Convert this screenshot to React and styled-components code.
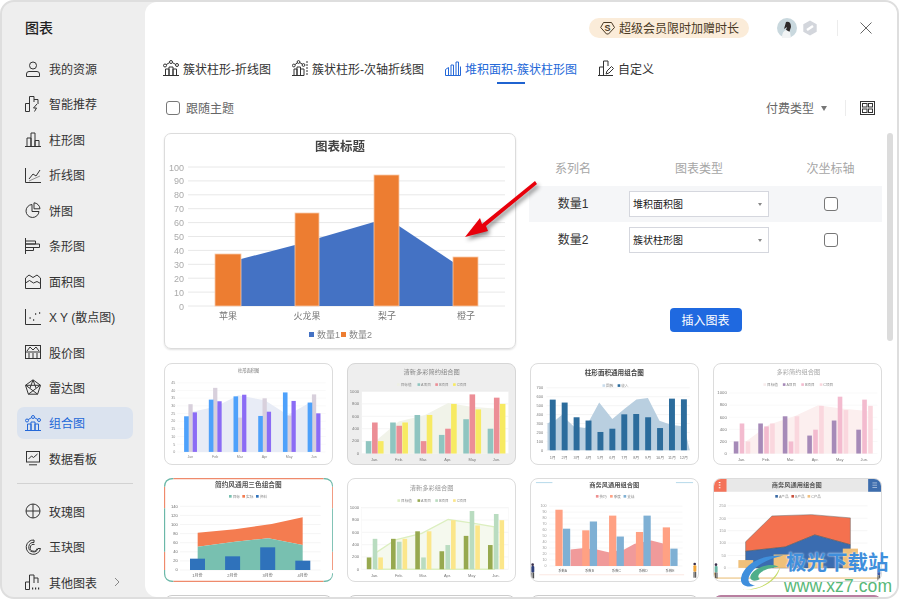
import React from "react";
import styled, { createGlobalStyle } from "styled-components";

const FONT = `"Liberation Sans", "Noto Sans CJK SC", sans-serif`;

const GlobalStyle = createGlobalStyle`
  html, body {
    margin: 0;
    padding: 0;
    background: #fff;
    font-family: ${FONT};
    overflow: hidden;
  }
  * { box-sizing: border-box; }
`;

const Frame = styled.div`
  width: 899px;
  height: 599px;
  border: 2px solid #dedede;
  border-radius: 14px;
  background: #eeeeee;
  display: flex;
  overflow: hidden;
`;

const Sidebar = styled.aside`
  width: 143px;
  flex: none;
  padding-top: 16px;
  color: #333;
`;

const SideTitle = styled.div`
  height: 20px;
  line-height: 20px;
  margin: 0 0 14.5px 23px;
  font-size: 14px;
  font-weight: 500;
  color: #222;
`;

const SideItem = styled.div`
  height: 32px;
  width: 116px;
  margin: 0 0 3.45px 15px;
  padding-left: 8px;
  display: flex;
  align-items: center;
  gap: 8px;
  font-size: 12px;
  border-radius: 7px;
  color: ${(p) => (p.$active ? "#2468d8" : "#333")};
  background: ${(p) => (p.$active ? "#dbe3ef" : "transparent")};
`;

const Chevron = styled.svg`
  margin-left: 9px;
`;

const SideDivider = styled.div`
  width: 116px;
  height: 1px;
  margin: 9px 0 11px 15px;
  background: #d2d2d2;
`;

const IconBox = styled.svg`
  width: 16px;
  height: 16px;
  flex: none;
  fill: none;
  stroke: currentColor;
  stroke-width: 1;
`;

const Main = styled.main`
  flex: 1;
  min-width: 0;
  background: #fff;
  border-radius: 12px 0 0 12px;
  position: relative;
  overflow: hidden;
`;

const TopBar = styled.div`
  height: 52px;
  display: flex;
  align-items: center;
  padding-left: 444px;
`;

const Pill = styled.div`
  width: 160px;
  height: 20px;
  border-radius: 10px;
  background: #fbecd9;
  display: flex;
  align-items: center;
  gap: 4px;
  padding: 0 0 1px 11px;
  font-size: 12px;
  color: #4a3a25;
`;

const Avatar = styled.svg`
  margin-left: 28px;
  flex: none;
`;

const Badge = styled.svg`
  margin-left: 5px;
  flex: none;
`;

const VRule = styled.div`
  width: 1px;
  height: ${(p) => p.$h}px;
  background: #ececec;
  margin-left: ${(p) => p.$ml}px;
  flex: none;
`;

const CloseIcon = styled.svg`
  margin-left: 22px;
  flex: none;
`;

const Tabs = styled.nav`
  height: 30px;
  display: flex;
  align-items: center;
  gap: 21px;
  padding-left: 18px;
`;

const Tab = styled.div`
  position: relative;
  height: 30px;
  display: flex;
  align-items: center;
  gap: 4px;
  padding-bottom: 2px;
  font-size: 12px;
  color: ${(p) => (p.$active ? "#2468d8" : "#333")};
  ${(p) =>
    p.$active &&
    `&::after {
      content: "";
      position: absolute;
      left: 52px;
      bottom: 0;
      width: 28px;
      height: 2px;
      background: #1f63d0;
    }`}
`;

const OptionBar = styled.div`
  height: 49px;
  padding: 0 22px 1px 21px;
  display: flex;
  align-items: center;
`;

const Check = styled.span`
  display: block;
  width: 14px;
  height: 14px;
  border: 1px solid #777;
  border-radius: 3px;
  background: #fff;
  flex: none;
`;

const FollowLabel = styled.span`
  margin-left: 6px;
  padding-bottom: 2px;
  font-size: 12px;
  color: #666;
`;

const PayType = styled.span`
  margin-left: auto;
  padding-bottom: 2px;
  font-size: 12px;
  color: #666;
`;

const SmallCaret = styled.span`
  width: 0;
  height: 0;
  margin-left: 7px;
  border-left: 3.5px solid transparent;
  border-right: 3.5px solid transparent;
  border-top: 5px solid #777;
  flex: none;
`;

const SelectCaret = styled.span`
  width: 0;
  height: 0;
  margin-top: 2px;
  border-left: 2.5px solid transparent;
  border-right: 2.5px solid transparent;
  border-top: 3px solid #888;
  flex: none;
`;

const GridIcon = styled.svg`
  margin-left: 14px;
  flex: none;
`;

const Body = styled.div`
  position: relative;
  display: flex;
  padding-left: 19px;
`;

const Content = styled.div`
  width: 718px;
  flex: none;
`;

const ScrollThumb = styled.div`
  width: 6px;
  height: 208px;
  margin-left: 5px;
  border-radius: 3px;
  background: #dcdcdc;
  flex: none;
`;

const Top = styled.section`
  display: flex;
  gap: 13px;
  height: 216px;
`;

const PreviewCard = styled.div`
  width: 352px;
  height: 216px;
  border: 1px solid #dcdcdc;
  border-radius: 7px;
  box-shadow: 0 1px 2px rgba(0, 0, 0, 0.12);
  overflow: hidden;
  flex: none;
`;

const ChartSvg = styled.svg`
  display: block;
  width: 100%;
  height: 100%;
  filter: blur(${(p) => p.$blur}px);
  font-family: ${FONT};
`;

const Settings = styled.div`
  width: 353px;
  display: flex;
  flex-direction: column;
  padding-top: 17px;
`;

const Row = styled.div`
  height: 36px;
  display: grid;
  grid-template-columns: 88px 12px 140px 1fr;
  align-items: center;
  font-size: 12px;
  padding-bottom: ${(p) => (p.$head ? "2px" : "0")};
  color: ${(p) => (p.$head ? "#a6a6a6" : "#333")};
  background: ${(p) => (p.$shade ? "#f5f6f8" : "transparent")};
`;

const NameCell = styled.div`
  grid-column: 1;
  text-align: center;
`;

const SeriesName = styled(NameCell)`
  padding-bottom: 3px;
`;

const TypeCell = styled.div`
  grid-column: 3;
  text-align: center;
`;

const AxisCell = styled.div`
  grid-column: 4;
  padding-left: 10px;
  display: flex;
  justify-content: center;
`;

const Select = styled.div`
  grid-column: 3;
  height: 26px;
  border: 1px solid #d5d7de;
  background: #fff;
  padding: 0 6px 1px 3px;
  display: flex;
  align-items: center;
  justify-content: space-between;
  font-size: 10px;
  color: #222;
`;

const InsertButton = styled.button`
  align-self: center;
  width: 72px;
  height: 24px;
  margin-top: 50px;
  border: 0;
  border-radius: 4px;
  background: #1f69e0;
  color: #fff;
  font-family: ${FONT};
  font-size: 12px;
  padding: 0 0 2px;
`;

const ThumbGrid = styled.section`
  margin-top: 14px;
  display: grid;
  grid-template-columns: repeat(4, 169px);
  grid-template-rows: 102px 104px 102px;
  gap: 13px 14px;
`;

const Thumb = styled.div`
  border: ${(p) => (p.$bare ? "none" : `1px solid ${p.$line || "#dcdcdc"}`)};
  border-radius: 8px;
  background: ${(p) => p.$bg || "#fff"};
  overflow: hidden;
`;

const ArrowOverlay = styled.svg`
  position: absolute;
  left: 315px;
  top: 45px;
  filter: drop-shadow(2px 3px 2px rgba(0, 0, 0, 0.45));
`;

const Watermark = styled.div`
  position: absolute;
  left: 593px;
  top: 549px;
  display: flex;
  align-items: flex-start;
`;

const MarkText = styled.div`
  margin-left: -2px;
`;

const MarkTitle = styled.div`
  font-size: 20.5px;
  line-height: 23px;
  font-weight: 700;
  color: #3f8fdc;
  text-shadow: 0 0 2px #fff;
`;

const MarkUrl = styled.div`
  font-size: 17.5px;
  line-height: 20px;
  margin: 2px 0 0 -2px;
  color: #58b878;
  letter-spacing: 0.1px;
  text-shadow: 0 0 2px #fff;
`;

const ICONS = {
  user: (
    <>
      <circle cx="8" cy="4.5" r="3.5" />
      <path d="M1.5 15.5v-2.500a2.500 2.500 0 0 1 2.500-2.500h8a2.500 2.500 0 0 1 2.500 2.500v2.500z" />
    </>
  ),
  smart: (
    <>
      <path d="M.5 15.5v-8h4v8zM4.5 9V.5h4.500V6M9 3.5h4V8" />
      <path d="M12 8l-3.500 4h3l-2 3.500" />
    </>
  ),
  column: (
    <>
      <path d="M0 15.5h16M2 15.5V7h4v8.500M6 15.5V2h4v13.500M10 15.5V9.500h4v6" />
    </>
  ),
  line: (
    <>
      <path d="M.5 1v14.500H16" />
      <path d="M4 12l4-5 3 2 4-6" />
      <path d="M4 14l11-5" opacity=".5" />
    </>
  ),
  pie: (
    <>
      <path d="M7 2.500a6.500 6.500 0 1 0 7 7H7z" />
      <path d="M9 .8a6.500 6.500 0 0 1 6 6H9z" />
    </>
  ),
  bar: (
    <>
      <path d="M.5 0v16M.5 3h10v3H.5M.5 6h14v3.500H.5M.5 9.500h8v3H.5" />
    </>
  ),
  area: (
    <>
      <path d="M.5 5L4 2l4 2.500L12 2l3.500 3v10.500H.5z" />
      <path d="M.5 10l4-2.500 4 2.500 3.500-1.500 3.500 2" />
    </>
  ),
  scatter: (
    <>
      <path d="M.5 0v15.500H16" />
      <path d="M4.500 9h1.200M8 11h1.200M10 5h1.200M14 4h1.200" strokeWidth="1.6" />
    </>
  ),
  stock: (
    <>
      <rect x=".5" y="1.5" width="15" height="13" />
      <path d="M.5 8h15M4 14.500V9M8 14.500V9M12 14.500V9M2 7l3-4 3 3 3-3 3 4" />
    </>
  ),
  radar: (
    <>
      <path d="M8 .8l7.500 5.500-2.900 8.900H3.400L.5 6.300z" />
      <path d="M.8 6.300l11.800 8.900M15.200 6.300L3.400 15.200M.8 6.300h14.400M8 1l-3 8M8 1l3 8" />
    </>
  ),
  combo: (
    <>
      <path d="M0 15.500h16M2.500 15.500V9h3.500v6.500M6 15.500V7h4v8.500M10 15.500V9h3.500v6.500" />
      <circle cx="2" cy="5.5" r="1.5" />
      <circle cx="8" cy="2" r="1.5" />
      <circle cx="14" cy="5" r="1.5" />
      <path d="M3.200 4.600l3.400-2M9.400 2.600l3.200 1.800" />
    </>
  ),
  board: (
    <>
      <rect x="1.5" y="1.5" width="13" height="10.5" />
      <path d="M4 14.800h8M3.500 9l3-3 2 1.500 4-3.500" />
    </>
  ),
  rose: (
    <>
      <circle cx="8" cy="8" r="7" />
      <path d="M8 1v14M1 8h14" />
    </>
  ),
  jade: (
    <>
      <path d="M9 1A7.200 7.200 0 1 0 15.500 9.500h-2.500A4.700 4.700 0 1 1 9 3.500z" />
      <path d="M9.500 5.500a3.400 3.400 0 1 0 2.500 4" />
    </>
  ),
  other: (
    <>
      <path d="M.5 15.500V8h4v7.500zM4.500 8V1h4.500v8M9 4h4v5" />
      <path d="M7 14.500h1.200M10 14.500h1.200M13 14.500h1.200" strokeWidth="1.8" />
    </>
  ),
  stack: (
    <>
      <path d="M.5 15.500v-6l3-2v8M.5 15.500h15v-9M6 15.500V5h2.500v10.500M11 15.500V2h2.500v13.500" />
    </>
  ),
  secondary: (
    <>
      <path d="M0 15.500h12M2 15.500V9h3v6.500M5 15.500V7h3.500v8.500M8.500 15.500V9H12v6.500" />
      <path d="M15 1v15" strokeDasharray="2 1" />
      <circle cx="1.8" cy="5.5" r="1.4" />
      <circle cx="6.5" cy="2" r="1.4" />
      <circle cx="11.5" cy="5" r="1.4" />
      <path d="M3 4.600l2.400-1.800M7.800 2.600l2.600 1.600" />
    </>
  ),
  custom: (
    <>
      <path d="M0 15.500h15M1.500 15.500V7h4v8.500M5.500 7V1h4.500v5" />
      <path d="M8 14l1-3 4.500-4.500 2 2L11 13z" />
    </>
  ),
};

const Icon = ({ name }) => <IconBox viewBox="0 0 16 16">{ICONS[name]}</IconBox>;

const sideTop = [
  ["user", "我的资源"],
  ["smart", "智能推荐"],
  ["column", "柱形图"],
  ["line", "折线图"],
  ["pie", "饼图"],
  ["bar", "条形图"],
  ["area", "面积图"],
  ["scatter", "X Y (散点图)"],
  ["stock", "股价图"],
  ["radar", "雷达图"],
  ["combo", "组合图", true],
  ["board", "数据看板"],
];

const tabs = [
  ["combo", "簇状柱形-折线图"],
  ["secondary", "簇状柱形-次轴折线图"],
  ["stack", "堆积面积-簇状柱形图", true],
  ["custom", "自定义"],
];

const months = ["Jan.", "Feb.", "Mar.", "Apr.", "May", "Jun."];

// every thumbnail is drawn in coordinates 3x the page, so one unit is a third of a pixel
const thumbs = [
  {
    vx: 27,
    h: 306,
    title: { t: "柱形面积图", x: 281, y: 47, size: 13, c: "#777" },
    grid: { x1: 64, x2: 515, y0: 293, step: 23.5, n: 10, c: "#f6f6f6" },
    yl: { vals: [45, 40, 35, 30, 25, 20, 15, 10, 5, 0], x: 58, size: 11 },
    xl: { vals: ["Jan", "Feb", "Mar", "Apr", "May", "Jun"], x: 104, step: 75, y: 312, size: 11 },
    area: { c: "#e8ecf6", pts: "110,170 180,155 250,120 330,135 400,180 470,140 470,293 110,293" },
    bars: [
      { c: "#d8d0dc", x: 98, w: 13, step: 75, tops: [147, 97, 188, 129, 182, 117] },
      { c: "#4ea1fb", x: 85, w: 14, step: 75, tops: [184, 133, 123, 183, 111, 142] },
      { c: "#8b6cf5", x: 111, w: 13, step: 75, tops: [172, 138, 118, 170, 137, 175] },
    ],
    base: 293,
  },
  {
    vx: 576,
    h: 306,
    bg: "#eeeeee",
    line: "#d6d6d6",
    plot: { x: 618, y: 108, w: 445, h: 190 },
    title: { t: "清新多彩简约组合图", x: 830, y: 56, size: 19, c: "#888" },
    legend: { y: 87, items: [["#eef0e4", "目标值", 725], ["#8fc5c0", "A项目", 787], ["#ec8e96", "B项目", 841], ["#f7ea62", "C项目", 895]] },
    grid: { x1: 618, x2: 1063, y0: 298, step: 38, n: 6, c: "#efefef" },
    yl: { vals: [1000, 800, 600, 400, 200, 0], x: 610, size: 13, c: "#777" },
    xl: { vals: months, x: 657, step: 74, y: 320, size: 12, c: "#777" },
    area: { c: "#f1f3e9", pts: "660,260 730,200 810,180 880,143 950,155 1020,160 1020,298 660,298" },
    bars: [
      { c: "#8fc5c0", x: 630, w: 17, step: 74, tops: [260, 203, 180, 241, 193, 222] },
      { c: "#ec8e96", x: 649, w: 17, step: 74, tops: [203, 213, 260, 222, 117, 127] },
      { c: "#f7ea62", x: 667, w: 17, step: 74, tops: [260, 203, 180, 146, 163, 146] },
    ],
    base: 298,
  },
  {
    vx: 15,
    h: 306,
    title: { t: "柱形面积通用组合图", x: 268, y: 58, size: 20, c: "#444", weight: 700 },
    legend: { y: 90, items: [["#c9dcec", "回款", 232], ["#2c6c9c", "收入", 278]] },
    grid: { x1: 62, x2: 497, y0: 288, step: 27.3, n: 8, c: "#f0f0f0" },
    yl: { vals: [700, 600, 500, 400, 300, 200, 100, 0], x: 52, size: 12, c: "#777" },
    xl: { vals: ["1月", "2月", "3月", "4月", "5月", "6月", "7月", "8月", "9月", "10月", "11月", "12月"], x: 81, step: 36.2, y: 314, size: 12, c: "#777" },
    area: { c: "#b9cfe0", pts: "65,205 90,195 108,180 145,215 180,220 222,142 262,192 300,160 335,133 370,128 405,198 440,210 480,215 497,288 65,288" },
    bars: [{ c: "#2c6c9c", x: 72, w: 18, step: 36.2, tops: [133, 142, 187, 197, 232, 222, 178, 177, 187, 220, 130, 132] }],
    base: 288,
  },
  {
    vx: 564,
    h: 306,
    title: { t: "多彩简约组合图", x: 820, y: 55, size: 19, c: "#aaa" },
    legend: { y: 87, items: [["#f8ecec", "目标值", 714], ["#a68ab8", "A项目", 773], ["#f3bbcf", "B项目", 829], ["#fad7de", "C项目", 885]] },
    grid: { x1: 610, x2: 1060, y0: 298, step: 37, n: 6, c: "#f6f6f6" },
    yl: { vals: [1000, 800, 600, 400, 200, 0], x: 603, size: 13, c: "#777" },
    xl: { vals: months, x: 648, step: 74.4, y: 320, size: 12, c: "#777" },
    area: { c: "#fcefef", pts: "660,262 730,210 810,183 880,150 950,160 1030,168 1030,298 660,298" },
    bars: [
      { c: "#a68ab8", x: 624, w: 14, step: 74.4, tops: [261, 206, 184, 243, 197, 225] },
      { c: "#f3bbcf", x: 642, w: 14, step: 74.4, tops: [206, 215, 261, 225, 124, 133] },
      { c: "#fad7de", x: 660, w: 14, step: 74.4, tops: [261, 206, 184, 152, 165, 152] },
    ],
    base: 298,
  },
  {
    vx: 27,
    h: 312,
    bare: true,
    trim: true,
    title: { t: "简约风通用三色组合图", x: 280, y: 52, size: 20, c: "#555", weight: 700 },
    legend: { y: 79, items: [["#78c0b0", "目标", 222], ["#f47c50", "实际", 262], ["#2f72bb", "资料", 303]] },
    grid: { x1: 75, x2: 497, y0: 300, step: 27.3, n: 8, c: "#f0f0f0" },
    yl: { vals: [140, 120, 100, 80, 60, 40, 20, 0], x: 68, size: 12, c: "#666" },
    xl: { vals: ["1月份", "2月份", "3月份", "4月份"], x: 127, step: 105.3, y: 320, size: 12, c: "#666" },
    polys: [
      { c: "#f47c50", pts: "128,188 240,178 350,162 443,142 443,225 340,205 240,215 128,230" },
      { c: "#78c0b0", pts: "128,230 240,215 340,205 443,225 443,300 128,300" },
    ],
    bars: [{ c: "#2f72bb", x: 105, w: 45, step: 105.3, tops: [266, 259, 232, 272] }],
    base: 300,
  },
  {
    vx: 576,
    h: 312,
    plot: { x: 618, y: 112, w: 445, h: 188, stroke: "#ececec" },
    title: { t: "清新多彩组合图", x: 830, y: 58, size: 19, c: "#999" },
    legend: { y: 90, items: [["#dcefc0", "目标值", 726], ["#97a94f", "A项目", 787], ["#b9dcc0", "B项目", 841], ["#fbe68a", "C项目", 895]] },
    grid: { x1: 618, x2: 1063, y0: 300, step: 37.6, n: 6, c: "#f2f2f2" },
    yl: { vals: [1000, 800, 600, 400, 200, 0], x: 610, size: 13, c: "#777" },
    xl: { vals: months, x: 657, step: 73.6, y: 323, size: 12, c: "#777" },
    area: { c: "#f5f9ee", pts: "660,250 720,210 800,190 880,148 950,158 1020,170 1020,300 660,300", stroke: "#dcefc0" },
    bars: [
      { c: "#97a94f", x: 633, w: 14, step: 73.6, tops: [264, 207, 184, 245, 198, 226] },
      { c: "#b9dcc0", x: 651, w: 14, step: 73.6, tops: [207, 216, 264, 226, 122, 131] },
      { c: "#fbe68a", x: 668, w: 14, step: 73.6, tops: [264, 207, 184, 150, 166, 150] },
    ],
    base: 300,
  },
  {
    vx: 15,
    h: 312,
    title: { t: "商务风通用组合图", x: 268, y: 49, size: 19, c: "#555", weight: 700 },
    legend: { y: 77, items: [["#ee8f8f", "技巧", 212], ["#ffa183", "季度", 255], ["#7fb0d4", "支战", 296]] },
    grid: { x1: 70, x2: 475, y0: 290, step: 18.3, n: 11, c: "#f3f3f3" },
    yl: { vals: [100, 90, 80, 70, 60, 50, 40, 30, 20, 10, 0], x: 62, size: 11, c: "#999" },
    xl: { vals: ["系数A", "系数B", "系数C", "系数D", "系数E"], x: 111, step: 81.5, y: 307, size: 10, c: "#666" },
    area: { c: "#f09a9a", pts: "135,240 170,236 215,240 250,248 298,240 330,222 380,212 410,220 432,225 432,290 135,290" },
    bars: [
      { c: "#ffa183", x: 89, w: 22, step: 81.5, tops: [118, 181, 136, 186, 172] },
      { c: "#7fb0d4", x: 112, w: 22, step: 81.5, tops: [176, 154, 200, 136, 237] },
    ],
    base: 290,
    decor: "business",
  },
  {
    vx: 564,
    h: 312,
    title: { t: "商务风通用组合图", x: 815, y: 49, size: 19, c: "#555", weight: 700 },
    band: true,
    legend: { y: 77, items: [["#3a6aa5", "A产品", 750], ["#c9503c", "B产品", 799], ["#f0c080", "C产品", 848]] },
    grid: { x1: 605, x2: 1030, y0: 296, step: 38, n: 6, c: "#f2f2f2" },
    yl: { vals: [250, 200, 150, 100, 50, 0], x: 600, size: 12, c: "#999" },
    polys: [
      { c: "#f4714f", pts: "660,216 740,137 860,133 978,143 978,225 870,195 780,232 660,245", stroke: "#666" },
      { c: "#3a6cb0", pts: "660,245 780,232 870,195 978,225 978,296 660,296", stroke: "#555" },
    ],
    rects: [
      { c: "#f0c07a", x: 638, y: 272, w: 45, h: 24 },
      { c: "#f0c07a", x: 745, y: 255, w: 52, h: 41 },
      { c: "#f0c07a", x: 850, y: 265, w: 46, h: 31 },
      { c: "#f0c07a", x: 955, y: 237, w: 46, h: 59 },
    ],
    decor: "bottomline",
  },
];

const Person = ({ x, y, coat }) => (
  <g transform={`translate(${x} ${y})`}>
    <circle cx="0" cy="-6" r="4" fill="#3a2f4a" />
    <rect x="-4" y="-2" width="9" height="20" rx="3" fill={coat} />
    <path d="M-2 18v18M3 18v18" stroke="#333" strokeWidth="3" />
  </g>
);

const ThumbChart = ({ d }) => (
  <ChartSvg $blur={0.5} viewBox={`${d.vx} 24 507 ${d.h}`} preserveAspectRatio="none">
    {d.band && (
      <>
        <rect x={d.vx} y="24" width="507" height="39" fill="#e8e8e8" />
        <rect x={d.vx} y="24" width="38" height="39" fill="#f4735a" />
        <rect x={d.vx + 468} y="24" width="39" height="39" fill="#3d6dad" />
        <path d="M581 33v3M581 41v3M581 49v3" stroke="#fff" strokeWidth="5" />
        <path d="M1045 36h14M1045 43h14M1045 50h14" stroke="#cfdcec" strokeWidth="2" />
      </>
    )}
    {d.plot && <rect x={d.plot.x} y={d.plot.y} width={d.plot.w} height={d.plot.h} fill="#fff" stroke={d.plot.stroke || "none"} />}
    {d.grid &&
      Array.from({ length: d.grid.n }).map((_, i) => (
        <line key={i} x1={d.grid.x1} x2={d.grid.x2} y1={d.grid.y0 - i * d.grid.step} y2={d.grid.y0 - i * d.grid.step} stroke={d.grid.c} strokeWidth="2" />
      ))}
    {d.area && <polygon points={d.area.pts} fill={d.area.c} stroke={d.area.stroke} strokeWidth={d.area.stroke ? 4 : 0} />}
    {d.polys && d.polys.map((p, i) => <polygon key={i} points={p.pts} fill={p.c} stroke={p.stroke} strokeWidth={p.stroke ? 1.5 : 0} />)}
    {d.bars &&
      d.bars.map((s) =>
        s.tops.map((top, i) => <rect key={`${s.c}${i}`} x={s.x + i * s.step} y={top} width={s.w} height={d.base - top} fill={s.c} />),
      )}
    {d.rects && d.rects.map((r, i) => <rect key={i} x={r.x} y={r.y} width={r.w} height={r.h} fill={r.c} />)}
    <text x={d.title.x} y={d.title.y} fontSize={d.title.size} fill={d.title.c} fontWeight={d.title.weight || 400} textAnchor="middle">
      {d.title.t}
    </text>
    {d.legend &&
      d.legend.items.map(([c, label, x]) => (
        <g key={label}>
          <rect x={x} y={d.legend.y - 4} width="8" height="8" fill={c} />
          <text x={x + 11} y={d.legend.y + 4} fontSize="11" fill="#888">
            {label}
          </text>
        </g>
      ))}
    {d.yl &&
      d.yl.vals.map((v, i) => (
        <text
          key={v}
          x={d.yl.x}
          y={d.grid.y0 - (d.yl.vals.length - 1 - i) * d.grid.step + 4}
          fontSize={d.yl.size}
          fill={d.yl.c || "#888"}
          textAnchor="end"
        >
          {v}
        </text>
      ))}
    {d.xl &&
      d.xl.vals.map((v, i) => (
        <text key={v} x={d.xl.x + i * d.xl.step} y={d.xl.y} fontSize={d.xl.size} fill={d.xl.c || "#888"} textAnchor="middle">
          {v}
        </text>
      ))}
    {d.trim && (
      <g fill="none" strokeWidth="5">
        <path d="M55 25H506M28 50V115M28 245V300M534 50V115M534 245V300M55 335H506" stroke="#ef8a6c" />
        <path d="M28 115V245M534 115V245M28 50Q28 25 55 25M506 25Q534 25 534 50M28 300V310Q28 335 55 335M534 310Q534 335 506 335" stroke="#6bb8a8" />
      </g>
    )}
    {d.decor === "business" && (
      <>
        <path d="M30 35h50M455 35h52" stroke="#b5d8ea" strokeWidth="3" />
        <path d="M40 317h440" stroke="#fbdcd4" strokeWidth="2" />
        <Person x={20} y={292} coat="#2e3f7a" />
        <Person x={512} y={290} coat="#f0a53a" />
      </>
    )}
    {d.decor === "bottomline" && (
      <>
        <path d="M566 310v10q0 7 7 7h490" fill="none" stroke="#e8b96c" strokeWidth="3" />
        <Person x={570} y={292} coat="#6bb5a5" />
        <Person x={1064} y={300} coat="#3a5aa8" />
      </>
    )}
  </ChartSvg>
);

const PreviewChart = () => {
  const ticks = [0, 10, 20, 30, 40, 50, 60, 70, 80, 90, 100];
  const yOf = (v) => 306 - v * 1.39;
  const cols = [
    { x: 215, w: 26, top: 254, name: "苹果", cx: 228 },
    { x: 295, w: 24, top: 213, name: "火龙果", cx: 307 },
    { x: 374, w: 25, top: 175, name: "梨子", cx: 387 },
    { x: 453, w: 25, top: 257, name: "橙子", cx: 466 },
  ];
  return (
    <ChartSvg $blur={0.45} viewBox="165 134 350 214">
      <text x="340" y="151" fontSize="12.5" fontWeight="700" fill="#444" textAnchor="middle">
        图表标题
      </text>
      {ticks.map((t) => (
        <g key={t}>
          <line x1="188" x2="505" y1={yOf(t)} y2={yOf(t)} stroke="#e8e8e8" />
          <text x="184" y={yOf(t) + 3.5} fontSize="9" fill="#aaa" textAnchor="end">
            {t}
          </text>
        </g>
      ))}
      <polygon points="228,262 241,259 295,245 319,238 374,222 399,226 453,262 466,268 466,306 228,306" fill="#4472c4" />
      {cols.map((c) => (
        <g key={c.name}>
          <rect x={c.x} y={c.top} width={c.w} height={306 - c.top} fill="#ed7d31" stroke="#f7c9a8" strokeWidth="0.8" />
          <text x={c.cx} y="319" fontSize="9" fill="#777" textAnchor="middle">
            {c.name}
          </text>
        </g>
      ))}
      <rect x="309" y="332" width="5" height="5" fill="#4472c4" />
      <text x="317" y="338" fontSize="9" fill="#888">
        数量1
      </text>
      <rect x="341" y="332" width="5" height="5" fill="#ed7d31" />
      <text x="349" y="338" fontSize="9" fill="#888">
        数量2
      </text>
    </ChartSvg>
  );
};

export default function App() {
  return (
    <>
      <GlobalStyle />
      <Frame>
        <Sidebar>
          <SideTitle>图表</SideTitle>
          {sideTop.map(([icon, label, active]) => (
            <SideItem key={label} $active={active}>
              <Icon name={icon} />
              {label}
            </SideItem>
          ))}
          <SideDivider />
          <SideItem>
            <Icon name="rose" />
            玫瑰图
          </SideItem>
          <SideItem>
            <Icon name="jade" />
            玉玦图
          </SideItem>
          <SideItem>
            <Icon name="other" />
            其他图表
            <Chevron width="6" height="10" viewBox="0 0 6 10" fill="none" stroke="#888">
              <path d="M1 1l4 4-4 4" />
            </Chevron>
          </SideItem>
        </Sidebar>

        <Main>
          <TopBar>
            <Pill>
              <svg width="15" height="14" viewBox="0 0 15 14" fill="none" stroke="#4a3a25">
                <path d="M3.500 1.500h8l3 5-6 6.500h-2L.7 6.500z" />
                <text x="7.5" y="10" fontSize="9" fontWeight="700" fill="#4a3a25" stroke="none" textAnchor="middle">
                  S
                </text>
              </svg>
              超级会员限时加赠时长
            </Pill>
            <Avatar width="20" height="20" viewBox="0 0 20 20">
              <circle cx="10" cy="10" r="10" fill="#c9d8de" />
              <path d="M9 4q5-1 5 5l-2 6-3-3 1-3-3 2z" fill="#2e2a2a" />
              <path d="M5 20q0-7 4-8l4 2 1 6z" fill="#f2f4f5" />
            </Avatar>
            <Badge width="16" height="16" viewBox="0 0 16 16">
              <path d="M8 .5l6.700 3.700v7.600L8 15.500l-6.700-3.700V4.200z" fill="#d3d6dc" />
              <path d="M5 10l6-4" stroke="#fff" strokeWidth="2.5" />
            </Badge>
            <VRule $h={16} $ml={19} />
            <CloseIcon width="12" height="12" viewBox="0 0 12 12" stroke="#666" fill="none">
              <path d="M.5.5l11 11M11.500.5l-11 11" />
            </CloseIcon>
          </TopBar>

          <Tabs>
            {tabs.map(([icon, label, active]) => (
              <Tab key={label} $active={active}>
                <Icon name={icon} />
                {label}
              </Tab>
            ))}
          </Tabs>

          <OptionBar>
            <Check />
            <FollowLabel>跟随主题</FollowLabel>
            <PayType>付费类型</PayType>
            <SmallCaret />
            <VRule $h={16} $ml={18} />
            <GridIcon width="15" height="14" viewBox="0 0 15 14" fill="none" stroke="#333">
              <rect x=".5" y=".5" width="14" height="13" />
              <rect x="2.500" y="2.500" width="4.500" height="3.500" />
              <rect x="8.500" y="2.500" width="4" height="3.500" />
              <rect x="2.500" y="8" width="4.500" height="3.500" />
              <rect x="8.500" y="8" width="4" height="3.500" />
            </GridIcon>
          </OptionBar>

          <Body>
            <Content>
              <Top>
                <PreviewCard>
                  <PreviewChart />
                </PreviewCard>
                <Settings>
                  <Row $head>
                    <NameCell>系列名</NameCell>
                    <TypeCell>图表类型</TypeCell>
                    <AxisCell>次坐标轴</AxisCell>
                  </Row>
                  <Row $shade>
                    <SeriesName>数量1</SeriesName>
                    <Select>
                      堆积面积图
                      <SelectCaret />
                    </Select>
                    <AxisCell>
                      <Check />
                    </AxisCell>
                  </Row>
                  <Row>
                    <SeriesName>数量2</SeriesName>
                    <Select>
                      簇状柱形图
                      <SelectCaret />
                    </Select>
                    <AxisCell>
                      <Check />
                    </AxisCell>
                  </Row>
                  <InsertButton>插入图表</InsertButton>
                </Settings>
              </Top>
              <ThumbGrid>
                {thumbs.map((d, i) => (
                  <Thumb key={i} $bare={d.bare} $bg={d.bg} $line={d.line}>
                    <ThumbChart d={d} />
                  </Thumb>
                ))}
                <Thumb $line="#cccccc" />
                <Thumb $line="#cccccc" />
                <Thumb $line="#cccccc" />
                <Thumb $line="#b87fa0" $bg="#b87fa0" />
              </ThumbGrid>
            </Content>
            <ScrollThumb />
            <ArrowOverlay width="80" height="64" viewBox="460 178 80 64">
              <polygon points="465,237 480,218 482,224 535,181 537,184 486,226 488,231" fill="#e8000b" />
            </ArrowOverlay>
          </Body>

          <Watermark>
            <svg width="50" height="42" viewBox="640 240 160 125">
              <path d="M785 250C720 245 660 275 650 320C645 345 670 355 695 345C670 345 665 320 690 295C715 270 750 258 785 250z" fill="#3f8fdc" />
              <path d="M770 285C740 270 690 290 680 315C675 330 695 335 710 325C700 320 705 305 725 297C740 290 755 288 770 285z" fill="#4fae8a" />
              <path d="M655 358C710 360 755 335 775 285C770 325 720 365 655 358z" fill="#c6dc6a" />
            </svg>
            <MarkText>
              <MarkTitle>极光下载站</MarkTitle>
              <MarkUrl>www.xz7.com</MarkUrl>
            </MarkText>
          </Watermark>
        </Main>
      </Frame>
    </>
  );
}
